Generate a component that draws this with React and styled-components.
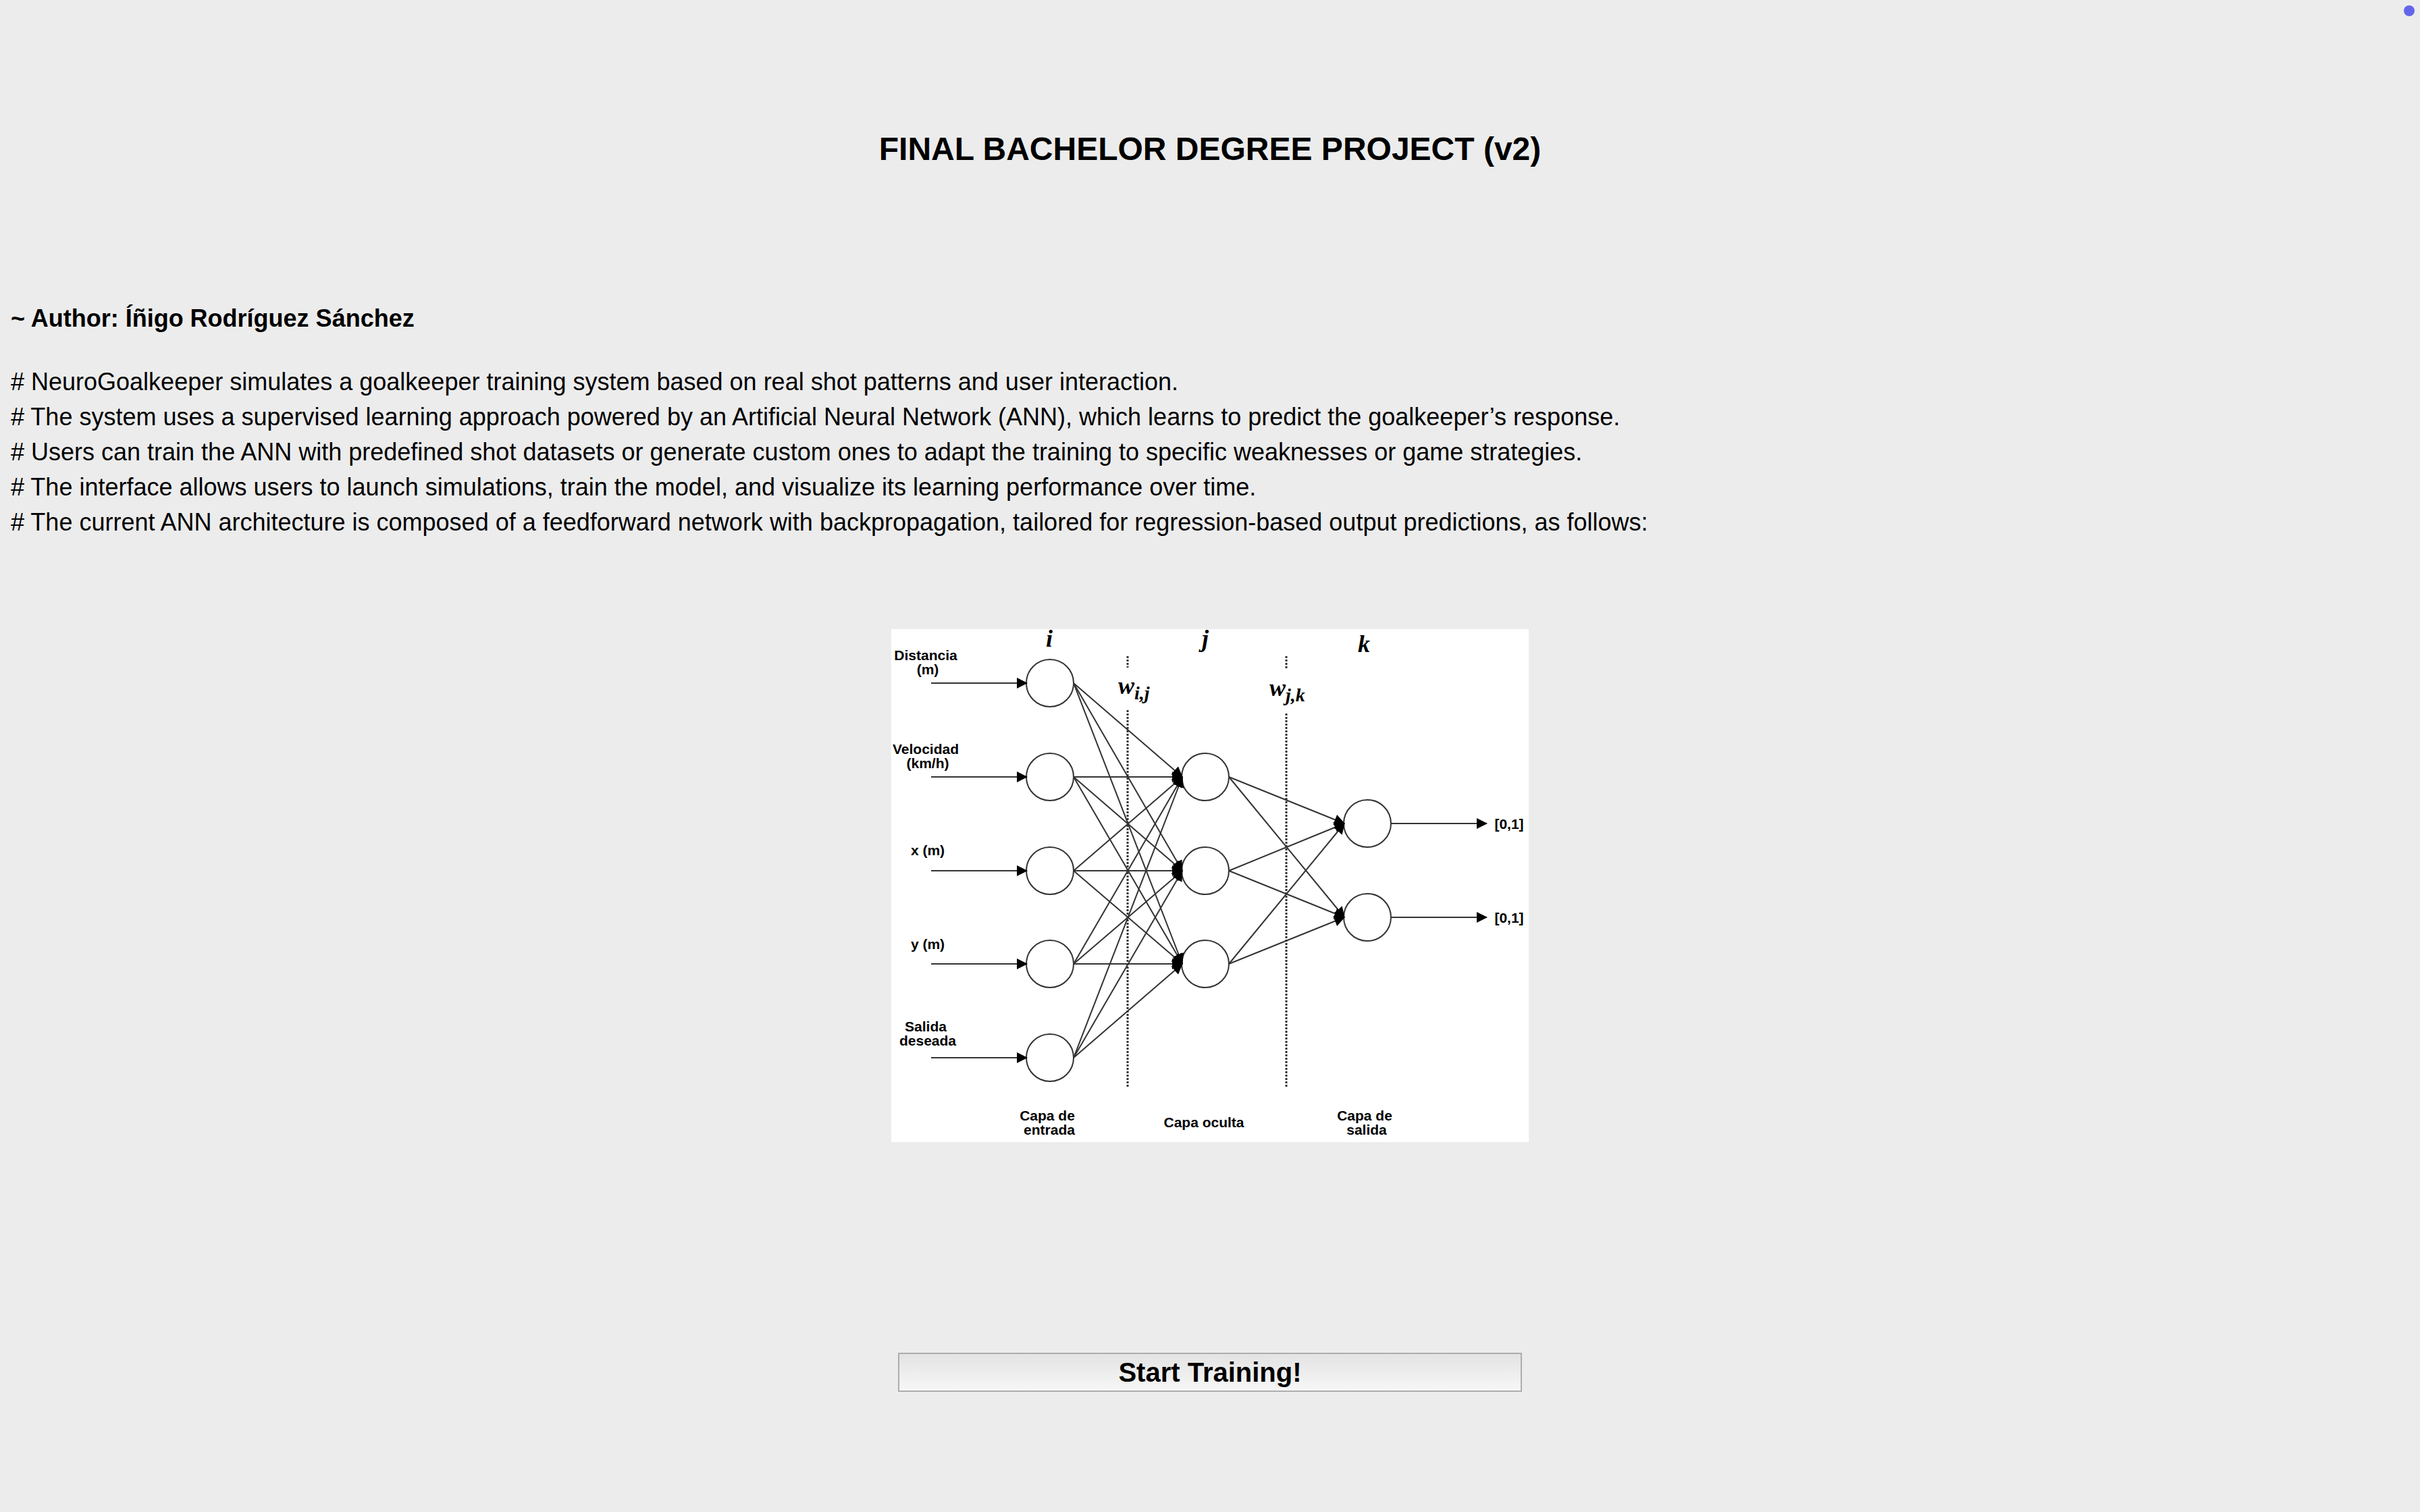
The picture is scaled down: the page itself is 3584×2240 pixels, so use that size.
import React from "react";
import styled, { createGlobalStyle } from "styled-components";

const GlobalStyle = createGlobalStyle`
  body {
    margin: 0;
    background: #ececec;
    color: #000;
    font-family: "Liberation Sans", Helvetica, Arial, sans-serif;
  }
`;

const Page = styled.main`
  position: relative;
  box-sizing: border-box;
  min-height: 100vh;
  display: flex;
  flex-direction: column;
  align-items: center;
  padding: 191px 16px 178px;
`;

const StatusDot = styled.span`
  position: absolute;
  top: 8px;
  right: 8px;
  width: 16px;
  height: 16px;
  border-radius: 50%;
  background: #6366ea;
`;

const Title = styled.h1`
  margin: 0;
  font-size: 48px;
  line-height: 60px;
  font-weight: bold;
`;

const About = styled.section`
  align-self: stretch;
  margin-top: 195px;
  display: flex;
  flex-direction: column;
  gap: 42px;
`;

const Author = styled.h2`
  margin: 0;
  font-size: 36px;
  line-height: 52px;
  font-weight: bold;
`;

const Notes = styled.div`
  font-size: 36px;
  line-height: 52px;
`;

const Note = styled.p`
  margin: 0;
`;

const Diagram = styled.svg`
  display: block;
  width: 944px;
  height: 760px;
  max-width: 100%;
  margin-top: 132px;
  overflow: visible;
  background: #fff;
`;

const Wire = styled.line`
  stroke: #333;
  stroke-width: 2;
`;

const Neuron = styled.circle`
  fill: #fff;
  stroke: #333;
  stroke-width: 2;
`;

const Divider = styled.line`
  stroke: #333;
  stroke-width: 3;
  stroke-dasharray: 3 2;
`;

const Label = styled.text`
  font: bold 21px "Liberation Sans", Arial, sans-serif;
  text-anchor: middle;
`;

const Symbol = styled.text`
  font: italic bold 36px "Liberation Serif", "Times New Roman", serif;
  text-anchor: ${(p) => p.$anchor || "middle"};
`;

const Subscript = styled.tspan`
  font-size: 28px;
`;

const StartButton = styled.button`
  box-sizing: border-box;
  width: 924px;
  max-width: 100%;
  height: 58px;
  margin-top: 312px;
  padding: 0;
  border: 2px solid #adadad;
  border-radius: 0;
  background: linear-gradient(#e3e3e3, #f7f7f7);
  color: #000;
  font: bold 40px "Liberation Sans", Helvetica, Arial, sans-serif;
`;

const NOTES = [
  "# NeuroGoalkeeper simulates a goalkeeper training system based on real shot patterns and user interaction.",
  "# The system uses a supervised learning approach powered by an Artificial Neural Network (ANN), which learns to predict the goalkeeper’s response.",
  "# Users can train the ANN with predefined shot datasets or generate custom ones to adapt the training to specific weaknesses or game strategies.",
  "# The interface allows users to launch simulations, train the model, and visualize its learning performance over time.",
  "# The current ANN architecture is composed of a feedforward network with backpropagation, tailored for regression-based output predictions, as follows:",
];

const RADIUS = 35;
const INPUT = { x: 235, ys: [80, 219, 358, 496, 635] };
const HIDDEN = { x: 465, ys: [219, 358, 496] };
const OUTPUT = { x: 705, ys: [288, 427] };

const LABELS = [
  ["Distancia", 51, 46],
  ["(m)", 54, 67],
  ["Velocidad", 51, 185],
  ["(km/h)", 54, 206],
  ["x (m)", 54, 335],
  ["y (m)", 54, 474],
  ["Salida", 51, 596],
  ["deseada", 54, 617],
  ["Capa de", 231, 728],
  ["entrada", 234, 749],
  ["Capa oculta", 463, 738],
  ["Capa de", 701, 728],
  ["salida", 704, 749],
  ["[0,1]", 915, 296],
  ["[0,1]", 915, 435],
];

const DIVIDERS = [
  [350, 40, 57],
  [350, 120, 678],
  [585, 40, 60],
  [585, 125, 678],
];

function links(from, to) {
  return from.ys.flatMap((y1) =>
    to.ys.map((y2) => (
      <Wire
        key={`${from.x}-${y1}-${y2}`}
        x1={from.x + RADIUS}
        y1={y1}
        x2={to.x - RADIUS + 1}
        y2={y2}
        markerEnd="url(#head)"
      />
    ))
  );
}

function NetworkDiagram() {
  return (
    <Diagram viewBox="0 0 944 760" role="img" aria-label="Neural network architecture">
      <defs>
        <marker
          id="head"
          markerUnits="userSpaceOnUse"
          markerWidth="16"
          markerHeight="18"
          refX="15"
          refY="9"
          orient="auto"
        >
          <path d="M0 1 L16 9 L0 17 Z" />
        </marker>
      </defs>

      {DIVIDERS.map(([x, y1, y2]) => (
        <Divider key={`${x}-${y1}`} x1={x} y1={y1} x2={x} y2={y2} />
      ))}

      {[INPUT, HIDDEN, OUTPUT].flatMap((layer) =>
        layer.ys.map((y) => <Neuron key={`${layer.x}-${y}`} cx={layer.x} cy={y} r={RADIUS} />)
      )}

      {INPUT.ys.map((y) => (
        <Wire key={y} x1={59} y1={y} x2={201} y2={y} markerEnd="url(#head)" />
      ))}
      {links(INPUT, HIDDEN)}
      {links(HIDDEN, OUTPUT)}
      {OUTPUT.ys.map((y) => (
        <Wire key={y} x1={740} y1={y} x2={882} y2={y} markerEnd="url(#head)" />
      ))}

      {LABELS.map(([text, x, y]) => (
        <Label key={`${x}-${y}`} x={x} y={y}>
          {text}
        </Label>
      ))}

      <Symbol x={234} y={26}>i</Symbol>
      <Symbol x={465} y={26}>j</Symbol>
      <Symbol x={700} y={34}>k</Symbol>
      <Symbol x={336} y={96} $anchor="start">
        w<Subscript dy={8}>i,j</Subscript>
      </Symbol>
      <Symbol x={560} y={99} $anchor="start">
        w<Subscript dy={8}>j,k</Subscript>
      </Symbol>
    </Diagram>
  );
}

export default function App() {
  return (
    <Page>
      <GlobalStyle />
      <StatusDot />
      <Title>FINAL BACHELOR DEGREE PROJECT (v2)</Title>
      <About>
        <Author>~ Author: Íñigo Rodríguez Sánchez</Author>
        <Notes>
          {NOTES.map((note) => (
            <Note key={note}>{note}</Note>
          ))}
        </Notes>
      </About>
      <NetworkDiagram />
      <StartButton type="button">Start Training!</StartButton>
    </Page>
  );
}
